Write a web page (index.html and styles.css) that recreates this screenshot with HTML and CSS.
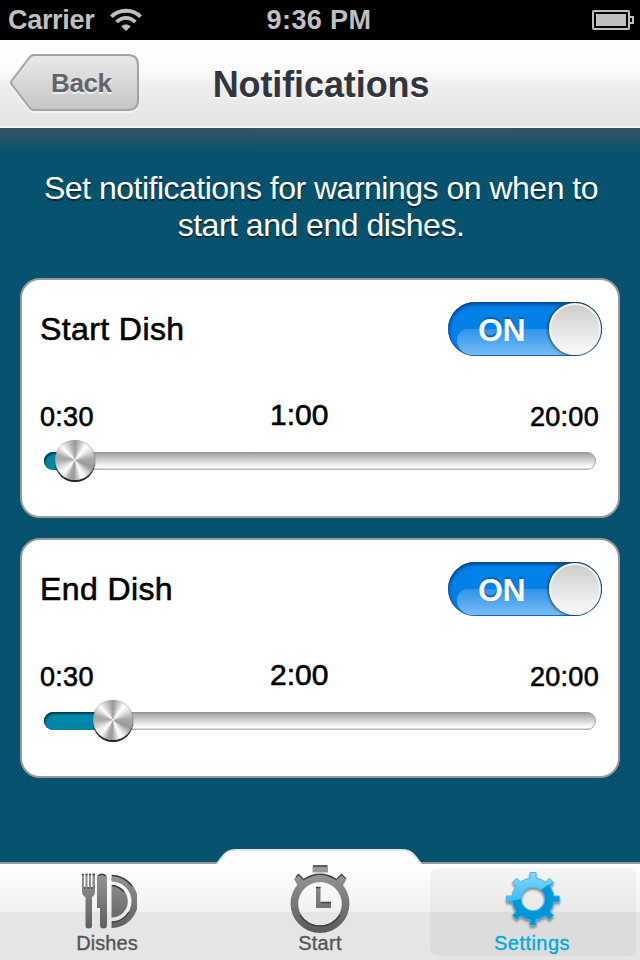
FILE: index.html
```html
<!DOCTYPE html>
<html lang="en">
<head>
<meta charset="utf-8">
<title>Notifications</title>
<link rel="stylesheet" href="styles.css">
</head>
<body>
<div class="screen">
  <header class="status">
    <div class="carrier"><span class="carrier-name">Carrier</span>
      <svg class="wifi" width="32" height="24" viewBox="0 0 32 24" fill="none" stroke="#bfbfbf" stroke-width="3.8">
        <path d="M1.500 8.800C9 .7 23 .7 30.500 8.800M6.700 14C12 8.400 20 8.400 25.300 14"/>
        <path d="M16 23L11.300 18.400C13.800 16 18.200 16 20.700 18.400Z" fill="#bfbfbf" stroke="none"/>
      </svg>
    </div>
    <span class="clock">9:36 PM</span>
    <svg class="battery" width="42" height="20" viewBox="0 0 42 20">
      <rect x="1" y="1" width="36" height="18" rx="1" fill="none" stroke="#bfbfbf" stroke-width="2"/>
      <rect x="4" y="4" width="30" height="12" fill="#bfbfbf"/>
      <path d="M38 7h3v6h-3" fill="none" stroke="#bfbfbf" stroke-width="2"/>
    </svg>
  </header>
  <nav class="navbar">
    <a class="back">
      <svg class="back-shape" width="130" height="62" viewBox="0 0 130 62">
        <defs><linearGradient id="backFill" x1="0" y1="0" x2="0" y2="1"><stop offset="0" stop-color="#e9e9e9"/><stop offset="1" stop-color="#c6c6c6"/></linearGradient></defs>
        <path d="M24 4H118Q128 4 128 14V49Q128 59 118 59H24Q21 59 19 56L1.500 33Q.5 31.500 1.500 30L19 7Q21 4 24 4Z" fill="none" stroke="#f4f4f4" stroke-width="2"/>
        <path d="M24 2H118Q128 2 128 12V47Q128 57 118 57H24Q21 57 19 54L1.500 31Q.5 29.500 1.500 28L19 5Q21 2 24 2Z" fill="url(#backFill)" stroke="#a3a3a3" stroke-width="2"/>
      </svg>
      <span class="back-label">Back</span>
    </a>
    <h1 class="title">Notifications</h1>
  </nav>
  <main class="content">
    <p class="intro">Set notifications for warnings on when to<br>start and end dishes.</p>
    <section class="card">
      <div class="card-head"><h2 class="name">Start Dish</h2><div class="switch"><span class="on">ON</span><i class="switch-knob"></i></div></div>
      <div class="values"><span>0:30</span><span class="current">1:00</span><span class="max">20:00</span></div>
      <div class="slider" style="--pos:31px"><div class="fill"></div><i class="thumb"></i></div>
    </section>
    <section class="card">
      <div class="card-head"><h2 class="name">End Dish</h2><div class="switch"><span class="on">ON</span><i class="switch-knob"></i></div></div>
      <div class="values"><span>0:30</span><span class="current">2:00</span><span class="max">20:00</span></div>
      <div class="slider" style="--pos:69px"><div class="fill"></div><i class="thumb"></i></div>
    </section>
  </main>
  <footer class="tabs">
    <svg class="tabs-bg" width="640" height="111" viewBox="0 0 640 111">
      <defs><linearGradient id="barFill" gradientUnits="userSpaceOnUse" x1="0" y1="14" x2="0" y2="63"><stop offset="0" stop-color="#fff"/><stop offset="1" stop-color="#f1f1f1"/></linearGradient></defs>
      <path d="M0 13H640V15H0Z" fill="#999"/>
      <path d="M0 15H217C223 8 225 1 236 .5H402C413 1 415 8 421 15H640V63H0Z" fill="url(#barFill)"/>
      <path d="M217 15C223 8 225 1 236 1H402C413 1 415 8 421 15" fill="none" stroke="#e3e6e8" stroke-width="2"/>
      <path d="M0 63H640V111H0Z" fill="#e5e5e5"/>
    </svg>
    <a class="tab dishes">
      <svg class="icon" width="60" height="70" viewBox="0 0 60 70">
        <defs><linearGradient id="steel" gradientUnits="userSpaceOnUse" x1="0" y1="4" x2="0" y2="70"><stop offset="0" stop-color="#9a9a9a"/><stop offset="1" stop-color="#585858"/></linearGradient></defs>
        <path d="M5 9H7V22H8.500V9H10.500V22H12V9H14V22H15.500V9H18V26Q18 31 15 32V61Q15 63.500 11.500 63.500Q8.500 63.500 8.500 61V32Q5 31 5 26ZM20 13Q20 9 25 9Q30 9 30 13V60Q30 63.500 26.500 63.500Q23 63.500 23 60V43H20ZM34.500 10A26.500 26.500 0 0 1 34.500 63V56.500A20 20 0 0 0 34.500 16.500ZM34.500 20A16.300 16.300 0 0 1 34.500 52.600Z" fill="url(#steel)"/>
        <path d="M5 9.500H7M8.500 9.500H10.500M12 9.500H14M15.500 9.500H18M7 23H8.500M10.500 23H12M14 23H15.500M21 11Q25 7.500 29 11M35 10.500Q47 11 55 21M35 20.500Q42 21 47 27M35 57Q46 56.500 52 47" fill="none" stroke="#3e3e3e" stroke-width="1.400"/>
      </svg>
      <span>Dishes</span>
    </a>
    <a class="tab start">
      <svg class="icon" width="64" height="70" viewBox="0 0 64 70">
        <g fill="url(#steel)">
          <path fill-rule="evenodd" d="M32 9A29.500 29.500 0 1 1 32 68A29.500 29.500 0 1 1 32 9ZM32 17A21.800 21.800 0 1 0 32 60.600A21.800 21.800 0 1 0 32 17Z"/>
          <path d="M26 .5H38Q40 .5 40 2.500V7.500H24.500V2.500Q24.500 .5 26 .5ZM6 14L10.500 9.500L16 15L10 21ZM58 15L53.500 10.500L48 16L54 22ZM28 22H32.500V37H43V43H28Z"/>
        </g>
        <path d="M25 1H39.500M8 12L10.500 9.500L15 14M49 14L53.500 9.500L58 14M15 15Q32 3.500 49 15M28 22.500H32.500M33 37.500H43M12 50Q19 61 32 61Q45 61 52 50" fill="none" stroke="#414141" stroke-width="1.400"/>
      </svg>
      <span>Start</span>
    </a>
    <a class="tab settings">
      <svg class="icon" width="60" height="70" viewBox="-30 -36 60 70">
        <defs>
          <linearGradient id="gearLight" gradientUnits="userSpaceOnUse" x1="0" y1="-26" x2="0" y2="12"><stop offset="0" stop-color="#84d6fc"/><stop offset="1" stop-color="#22b2f4"/></linearGradient>
          <clipPath id="gearClip"><path d="M-30 4Q-5 0 9 -10Q20 -18 30 -18V34H-30Z"/></clipPath>
          <path id="gear" fill-rule="evenodd" d="M-3 -26.500H3V-20.900A21.100 21.100 0 0 1 12.500 -17L16.500 -20.700L20.700 -16.500L17 -12.500A21.100 21.100 0 0 1 20.900 -3H26.500V3H20.900A21.100 21.100 0 0 1 17 12.500L20.700 16.500L16.500 20.700L12.500 17A21.100 21.100 0 0 1 3 20.900V26.500H-3V20.900A21.100 21.100 0 0 1 -12.500 17L-16.500 20.700L-20.700 16.500L-17 12.500A21.100 21.100 0 0 1 -20.900 3H-26.500V-3H-20.900A21.100 21.100 0 0 1 -17 -12.500L-20.700 -16.500L-16.500 -20.700L-12.500 -17A21.100 21.100 0 0 1 -3 -20.900ZM0 -11.800A11.800 11.800 0 1 0 0 11.800A11.800 11.800 0 1 0 0 -11.800Z"/>
        </defs>
        <g class="gear-shadow"><use href="#gear" fill="url(#gearLight)"/><use href="#gear" fill="#0096da" clip-path="url(#gearClip)"/><use href="#gear" fill="none" stroke="#45bbf0" stroke-width="1"/></g>
      </svg>
      <span>Settings</span>
    </a>
  </footer>
</div>
</body>
</html>
```
FILE: styles.css
```css
* { box-sizing: border-box; }
body { margin: 0; font-family: "Liberation Sans", Arial, sans-serif; color: #000; }
h1, h2, p { margin: 0; font-weight: normal; }
.screen {
  width: 640px; height: 960px; overflow: hidden; display: flex; flex-direction: column;
  background: linear-gradient(-45deg, #024d69 25%, #095772 25% 50%, #024d69 50% 75%, #095772 75%) 0 0 / 4px 4px;
}
.status {
  height: 40px; flex: none; background: #000; color: #bfbfbf; display: grid;
  grid-template-columns: 1fr auto 1fr; align-items: center; padding: 0 6px 0 8px;
  font-size: 27px; font-weight: bold; line-height: 40px;
}
.carrier { display: flex; align-items: center; gap: 16px; }
.carrier-name { letter-spacing: -.3px; }
.wifi { margin-top: -1px; }
.clock { letter-spacing: .4px; margin-left: -4px; }
.battery { justify-self: end; margin-top: -1px; }
.navbar {
  height: 88px; flex: none; padding: 13px 10px; display: grid; grid-template-columns: 130px 1fr 130px;
  background: linear-gradient(#fff 0, #fcfcfc 34%, #eee 54%, #e4e4e4 97%, #f3f3f3 98%);
}
.back { display: grid; }
.back-shape, .back-label { grid-area: 1 / 1; }
.back-label {
  padding-left: 41px; line-height: 61px; font-size: 26px; font-weight: bold;
  color: #636469; text-shadow: 0 2px 0 #eee; letter-spacing: -.4px; z-index: 1;
}
.title {
  text-align: center; font-size: 36px; line-height: 64px; font-weight: bold; color: #32353d;
  text-shadow: 0 2px 0 #fff; letter-spacing: -.1px; padding-left: 2px;
}
.content {
  flex: 1; padding: 42px 20px 0; display: flex; flex-direction: column; gap: 20px;
  background: linear-gradient(#40555fdd, #40555f00 26px);
}
.intro {
  height: 88px; text-align: center; color: #fff; font-size: 32px; line-height: 37px; padding-left: 2px;
  letter-spacing: -.5px; text-shadow: 0 2px 1px #00202ecc;
}
.card {
  height: 240px; flex: none; border: 2px solid #999; border-radius: 20px; background: #fff;
  padding: 22px 16px 0 18px;
}
.card-head { display: flex; justify-content: space-between; align-items: center; height: 54px; }
.name { font-size: 32px; line-height: 54px; letter-spacing: .4px; -webkit-text-stroke: .6px #000; }
.switch {
  width: 154px; height: 54px; border-radius: 27px; display: flex; align-items: center; justify-content: space-between;
  padding: 0 1px 0 30px; color: #fff; font-size: 32px; font-weight: bold; position: relative; overflow: hidden;
  background: #0480e9; box-shadow: inset 0 2px 4px #003c85, inset 0 0 2px #234a75;
}
.switch::before {
  content: ""; position: absolute; left: 9px; top: 27px; width: 144px; height: 26px;
  border-radius: 16px 0 0 22px; background: linear-gradient(#2f94ea, #76bbf5);
}
.on { position: relative; text-shadow: 0 -2px 1px #0061b8; letter-spacing: -.5px; padding-top: 2px; }
.switch-knob {
  width: 52px; height: 52px; border-radius: 50%; position: relative; border: 2px solid #f4f4f4;
  background: linear-gradient(#cdcdcd, #fafafa); box-shadow: 0 0 3px 1px #333;
}
.values {
  display: grid; grid-template-columns: 1fr 60px 1fr; align-items: end; margin-top: 41px; height: 34px;
  font-size: 27px; line-height: 30px; letter-spacing: .3px; -webkit-text-stroke: .6px #000; padding-right: 3px;
}
.current { font-size: 30px; line-height: 35px; margin: 0 0 0 -19.500px; letter-spacing: 0; white-space: nowrap; }
.max { text-align: right; }
.slider {
  width: 552px; height: 18px; margin: 21px 0 0 4px; border-radius: 9px; position: relative;
  background: linear-gradient(#888 0, #aaa 12%, #ddd 55%, #fff 85%, #fff 90%, #bbb 93%);
  box-shadow: inset 1px 0 1px #aaa, inset -1px 0 1px #aaa;
}
.fill {
  width: var(--pos); height: 18px; border-radius: 9px 0 0 9px;
  background: linear-gradient(#008cac, #0083a5); box-shadow: inset 1px 2px 2px #003d4c;
}
.thumb {
  position: absolute; left: calc(var(--pos) - 20px); top: -12px; width: 40px; height: 40px; border-radius: 50%;
  background: conic-gradient(#999 0, #a4a4a4 5deg, #fff 38deg, #eee 52deg, #aaa 85deg, #999 115deg, #eee 145deg, #fff 158deg, #999 185deg, #aaa 198deg, #fff 220deg, #eee 235deg, #aaa 270deg, #aaa 285deg, #fff 315deg, #ddd 328deg, #999);
  box-shadow: 0 2px 0 #222, 0 1px 2px #555, inset 0 0 1px #777;
}
.tabs {
  height: 111px; flex: none; display: grid; grid-template-columns: 214px 212px 214px; position: relative;
}
.tabs-bg { position: absolute; left: 0; top: 0; z-index: 0; }
.tab {
  position: relative; display: flex; flex-direction: column; align-items: center; margin-top: 16px;
  font-size: 20px; line-height: 24px; color: #555; -webkit-text-stroke: .35px currentColor;
}
.tab span { margin-top: -4px; letter-spacing: .1px; }
.start span { letter-spacing: .3px; }
.dishes .icon { margin-left: -1px; }
.start .icon { margin-left: -1px; }
.settings { margin: 19px 4px 4px; background: #00000009; border-radius: 8px; color: #00acd5; }
.settings .icon { margin-top: -5px; margin-left: -1px; }
.settings span { margin-top: -2px; letter-spacing: .45px; margin-left: -2px; }
.gear-shadow { filter: drop-shadow(0 2px 1px #888); }
```
